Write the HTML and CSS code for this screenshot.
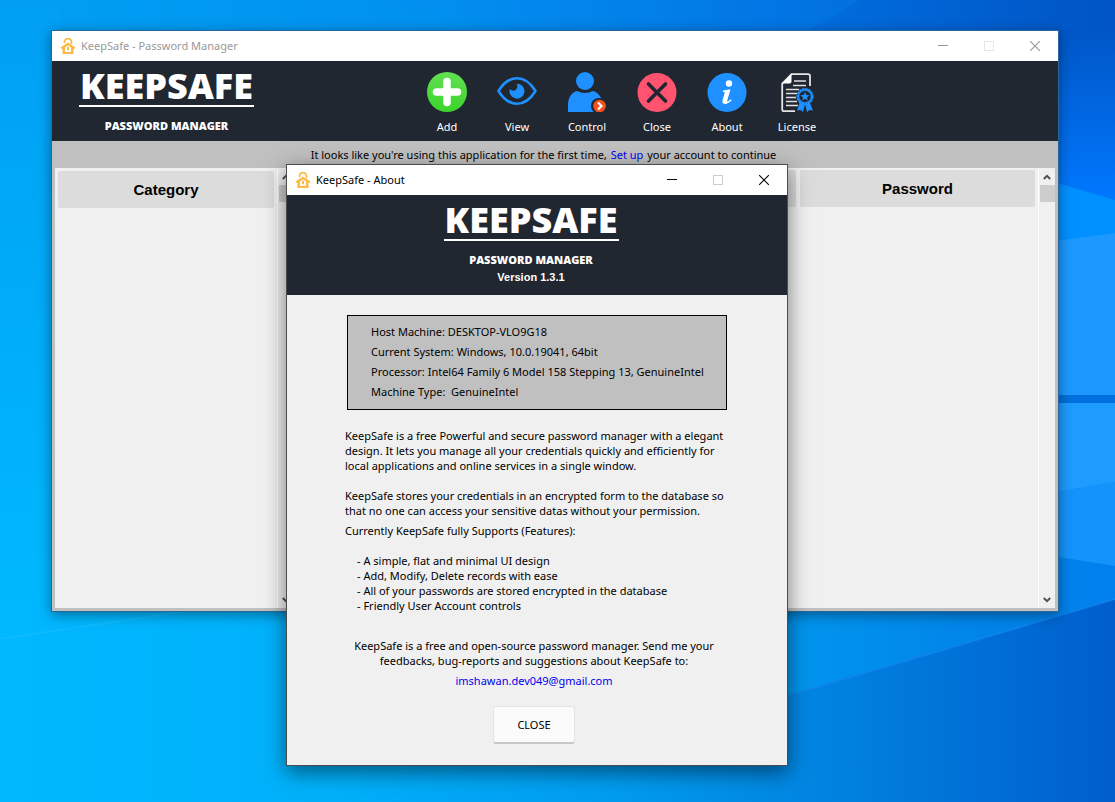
FILE: index.html
```html
<!DOCTYPE html>
<html lang="en">
<head>
<meta charset="utf-8">
<title>KeepSafe - Password Manager</title>
<link rel="stylesheet" href="styles.css">
</head>
<body>
<svg class="sprite" aria-hidden="true">
  <symbol id="app" viewBox="0 0 16 16">
    <path d="M4.500 5V4a3.500 3.500 0 0 1 7 0v2" fill="none" stroke="#fcb945" stroke-width="1.800"/>
    <path d="M8 4.500 15.500 9.500 14.500 10.800H13.500V16H2.500V10.800H1.500L.5 9.500Z" fill="#fcb945"/>
    <path d="M5 9.500 8 7.300 11 9.500V14H5Z" fill="#fff"/>
    <rect x="7" y="8.500" width="2" height="4" rx="1" fill="#fcb945"/>
  </symbol>
  <symbol id="min" viewBox="0 0 10 10"><path d="M0 4.500H10" fill="none" stroke="currentColor"/></symbol>
  <symbol id="max" viewBox="0 0 10 10"><rect x=".5" y=".5" width="9" height="9" fill="none" stroke="currentColor"/></symbol>
  <symbol id="x" viewBox="0 0 10 10"><path d="M0 0 10 10M10 0 0 10" fill="none" stroke="currentColor" stroke-width="1.100"/></symbol>
  <symbol id="up" viewBox="0 0 8 6"><path d="M.8 5 4 1.800 7.200 5" fill="none" stroke="currentColor" stroke-width="2"/></symbol>
  <symbol id="down" viewBox="0 0 8 6"><path d="M.8 1 4 4.200 7.200 1" fill="none" stroke="currentColor" stroke-width="2"/></symbol>
</svg>

<main class="desktop">
  <svg class="wallpaper" viewBox="0 0 1115 802" preserveAspectRatio="none" aria-hidden="true">
    <defs>
      <linearGradient id="top" x1="0" y1="0" x2="1" y2="0">
        <stop offset="0" stop-color="#00a0f4"/><stop offset=".4" stop-color="#0090ee"/><stop offset=".7" stop-color="#0070e0"/><stop offset="1" stop-color="#0054c4"/>
      </linearGradient>
      <linearGradient id="floor" x1="0" y1="0" x2="1" y2="0">
        <stop offset="0" stop-color="#00b8ff"/><stop offset=".3" stop-color="#00b0fa"/><stop offset=".55" stop-color="#009cf0"/><stop offset=".72" stop-color="#0086e2"/><stop offset="1" stop-color="#005ecc"/>
      </linearGradient>
      <linearGradient id="side" x1="0" y1="0" x2="0" y2="1">
        <stop offset="0" stop-color="#0056c6"/><stop offset="1" stop-color="#0078ff"/>
      </linearGradient>
      <linearGradient id="left" x1="0" y1="0" x2="0" y2="1">
        <stop offset="0" stop-color="#009ff4"/><stop offset="1" stop-color="#00b9ff"/>
      </linearGradient>
      <linearGradient id="ray" x1="0" y1="0" x2="1" y2="0">
        <stop offset="0" stop-color="#0096ee"/><stop offset=".6" stop-color="#0084e8"/><stop offset="1" stop-color="#0080ee"/>
      </linearGradient>
    </defs>
    <rect width="1115" height="802" fill="url(#top)"/>
    <path d="M375 0H860L760 60H690Z" fill="#0a8cf4" opacity=".2"/>
    <rect width="60" height="640" fill="url(#left)"/>
    <rect x="1058" y="30" width="57" height="170" fill="url(#side)"/>
    <path d="M1040 178 1115 200V600H1040Z" fill="#0090ff"/>
    <path d="M1040 243 1115 233V396H1040Z" fill="#1c98ff"/>
    <rect x="1040" y="395" width="75" height="8" fill="#0070de"/>
    <path d="M1040 403H1115V482L1040 495Z" fill="#1e9bff"/>
    <path d="M1040 495 1115 482V566L1040 554Z" fill="#1493fb"/>
    <rect y="600" width="1115" height="202" fill="url(#floor)"/>
    <path d="M780 600V698L1115 599V566L1040 554V600Z" fill="url(#ray)"/>
    <path d="M780 698 1115 599" stroke="#1485ee" stroke-width="2" opacity=".7"/>
    <path d="M0 639 200 609" stroke="#18bdff" stroke-width="2" opacity=".6"/>
  </svg>

  <section class="window main-window" aria-label="KeepSafe - Password Manager">
    <header class="titlebar inactive">
      <svg class="app-icon"><use href="#app"/></svg>
      <span class="title">KeepSafe - Password Manager</span>
      <button class="control" aria-label="Minimize"><svg><use href="#min"/></svg></button>
      <button class="control" aria-label="Maximize" disabled><svg><use href="#max"/></svg></button>
      <button class="control" aria-label="Close window"><svg><use href="#x"/></svg></button>
    </header>
    <div class="banner">
      <div class="brand">
        <div class="brand-name">KEEPSAFE</div>
        <div class="brand-sub">PASSWORD MANAGER</div>
      </div>
      <nav class="toolbar">
        <button class="tool"><svg viewBox="0 0 40 40"><defs><linearGradient id="g" x2="0" y2="1"><stop stop-color="#62e052"/><stop offset="1" stop-color="#3bd42c"/></linearGradient></defs><circle cx="20" cy="20" r="20" fill="url(#g)"/><path d="M20 9.500V30.500M9.500 20H30.500" stroke="#fff" stroke-width="7.500" stroke-linecap="round"/></svg>Add</button>
        <button class="tool"><svg viewBox="0 0 40 40"><path d="M1.500 19C12 2 28 2 38.500 19C28 36 12 36 1.500 19Z" fill="none" stroke="#1e90ff" stroke-width="2.600" stroke-linejoin="round"/><path d="M19.500 11.700A7.500 7.500 0 1 1 12.800 17A4.200 4.200 0 1 0 19.500 11.700Z" fill="#1e90ff"/></svg>View</button>
        <button class="tool"><svg viewBox="0 0 40 40"><circle cx="18" cy="9" r="9" fill="#1e90ff"/><path d="M1 40V33C1 24 6 20 10 19Q18 23 26 19C30 20 33 23 34.500 27L29 40Z" fill="#1e90ff"/><circle cx="32" cy="34" r="8" fill="#212730"/><circle cx="32.500" cy="34" r="6.300" fill="#f4511e"/><path d="M31 30.500 34.500 34 31 37.500" fill="none" stroke="#fff" stroke-width="2.200"/></svg>Control</button>
        <button class="tool"><svg viewBox="0 0 40 40"><circle cx="20" cy="20.500" r="19.500" fill="#ff5370"/><path d="M11.500 12 28.500 29M28.500 12 11.500 29" stroke="#212730" stroke-width="3.600" stroke-linecap="round"/></svg>Close</button>
        <button class="tool"><svg viewBox="0 0 40 40"><circle cx="20" cy="20.500" r="19.500" fill="#1e90ff"/><circle cx="22" cy="11.500" r="3.200" fill="#fff"/><path d="M16 18.500 23.500 17.300 20.200 28.800Q20 30 21.200 29.300L24 27.200 24.700 28.200C22 31 19 32.400 16.800 31.800Q14.800 31.100 15.500 28.500L17.700 20.700Q17.800 19.900 15.800 19.800Z" fill="#fff"/></svg>About</button>
        <button class="tool"><svg viewBox="0 0 40 40"><path d="M18 39.200H7Q5.200 39.200 5.200 37.500V11.500L14.500 2.200H31Q33 2.200 33 4V14" fill="none" stroke="#e4e4e4" stroke-width="1.800"/><path d="M5.200 11.500H12.500Q14.500 11.500 14.500 9.500V2.200Z" fill="#fff"/><path d="M17 9H29M16 13.500H29M9 17.500H22M9 21.500H20M9 25.500H19M9 29.500H20M9 33.500H21" stroke="#e0e0e0" stroke-width="1.600"/><path d="M23 30 20 38.500 23.700 38 26 40 28 32 30 40 32.500 38 36 38.500 32.500 30Z" fill="#1e90ff"/><circle cx="28" cy="24.500" r="7.500" fill="#212730" stroke="#1e90ff" stroke-width="2.200" stroke-dasharray="2.600 .6"/><circle cx="28" cy="24.500" r="6.500" fill="none" stroke="#1e90ff" stroke-width="1.400"/><path d="M28 20 29.300 23.100 32.500 23.300 30 25.400 30.800 28.500 28 26.800 25.200 28.500 26 25.400 23.500 23.300 26.700 23.100Z" fill="#1e90ff"/></svg>License</button>
      </nav>
    </div>
    <p class="notice">It looks like you're using this application for the first time, <a href="#setup">Set up</a> your account to continue</p>
    <div class="panes">
      <div class="pane pane-category"><h2 class="column">Category</h2></div>
      <div class="scrollbar"><svg><use href="#up"/></svg><span class="thumb"></span><svg class="arrow-down"><use href="#down"/></svg></div>
      <div class="pane pane-records"><div class="column"></div><h2 class="column column-password">Password</h2></div>
      <div class="scrollbar"><svg><use href="#up"/></svg><span class="thumb"></span><svg class="arrow-down"><use href="#down"/></svg></div>
    </div>
  </section>

  <section class="window about-window" role="dialog" aria-label="KeepSafe - About">
    <header class="titlebar">
      <svg class="app-icon"><use href="#app"/></svg>
      <span class="title">KeepSafe - About</span>
      <button class="control" aria-label="Minimize"><svg><use href="#min"/></svg></button>
      <button class="control" aria-label="Maximize" disabled><svg><use href="#max"/></svg></button>
      <button class="control" aria-label="Close window"><svg><use href="#x"/></svg></button>
    </header>
    <div class="about-banner">
      <div class="brand">
        <div class="brand-name">KEEPSAFE</div>
        <div class="brand-sub">PASSWORD MANAGER</div>
      </div>
      <div class="version">Version 1.3.1</div>
    </div>
    <div class="about-body">
      <div class="machine">
        <div>Host Machine: DESKTOP-VLO9G18</div>
        <div>Current System: Windows, 10.0.19041, 64bit</div>
        <div>Processor: Intel64 Family 6 Model 158 Stepping 13, GenuineIntel</div>
        <div>Machine Type:&nbsp; GenuineIntel</div>
      </div>
      <p class="intro">KeepSafe is a free Powerful and secure password manager with a elegant<br>design. It lets you manage all your credentials quickly and efficiently for<br>local applications and online services in a single window.</p>
      <p class="storage">KeepSafe stores your credentials in an encrypted form to the database so<br>that no one can access your sensitive datas without your permission.</p>
      <p class="supports">Currently KeepSafe fully Supports (Features):</p>
      <ul class="features">
        <li>- A simple, flat and minimal UI design</li>
        <li>- Add, Modify, Delete records with ease</li>
        <li>- All of your passwords are stored encrypted in the database</li>
        <li>- Friendly User Account controls</li>
      </ul>
      <div class="contact">
        <p>KeepSafe is a free and open-source password manager. Send me your<br>feedbacks, bug-reports and suggestions about KeepSafe to:</p>
        <a href="mailto:imshawan.dev049@gmail.com">imshawan.dev049@gmail.com</a>
        <button class="close-button">CLOSE</button>
      </div>
    </div>
  </section>
</main>
</body>
</html>
```
FILE: styles.css
```css
* { box-sizing: border-box; }

body {
  margin: 0;
  font-family: "Noto Sans", "Open Sans", sans-serif;
  font-size: 11px;
  line-height: 15px;
  color: #000;
}

p, h2, ul { margin: 0; padding: 0; }
ul { list-style: none; }
a { color: #0000f0; text-decoration: none; }
button { font: inherit; color: inherit; border: 0; padding: 0; background: none; }
.sprite { position: absolute; width: 0; height: 0; }

.desktop {
  position: relative;
  min-height: 100vh;
  overflow: hidden;
}
.wallpaper { position: absolute; inset: 0; width: 100%; height: 100%; }

.window {
  position: absolute;
  display: flex;
  flex-direction: column;
  background: #f0f0f0;
}
.main-window {
  left: 51px;
  right: 56px;
  top: 30px;
  min-height: 582px;
  border: 1px solid #27679b;
  box-shadow: 0 3px 12px rgba(0, 0, 0, .4);
}
.about-window {
  left: 286px;
  top: 164px;
  width: 502px;
  border: 1px solid #4a4e52;
  box-shadow: 0 6px 20px rgba(0, 0, 0, .5);
}

.titlebar {
  display: flex;
  align-items: center;
  height: 30px;
  padding-left: 8px;
  background: #fff;
}
.inactive { color: #999; }
.app-icon { width: 16px; height: 16px; margin-right: 5px; }
.title { flex: 1; padding-bottom: 2px; }
.control { display: grid; place-items: center; width: 46px; height: 30px; }
.control svg { width: 10px; height: 10px; }
.control:disabled { color: #ccc; }
.inactive .control:disabled { color: #e6e6e6; }

.banner {
  display: grid;
  grid-template-columns: 360px 1fr;
  height: 80px;
  background: #212730;
  color: #fff;
}
.brand {
  width: 175px;
  font-family: "Open Sans", sans-serif;
  font-weight: 800;
  color: #fff;
}
.banner .brand { margin: 10px 0 0 27px; }
.brand-name {
  display: flex;
  justify-content: center;
  font-size: 36px;
  line-height: 30px;
  padding-bottom: 4px;
  border-bottom: 2px solid #fff;
  white-space: nowrap;
}
.brand-sub {
  font-size: 11px;
  line-height: 14px;
  padding-top: 12px;
  text-align: center;
}

.toolbar { display: flex; padding-top: 11px; }
.tool {
  display: flex;
  flex-direction: column;
  align-items: center;
  gap: 7px;
  width: 70px;
}
.tool svg { width: 40px; height: 40px; }

.notice {
  min-height: 27px;
  padding: 6px 23px 6px 0;
  background: #c0c0c0;
  text-align: center;
}
.notice a { margin: 0 1px; }
.panes {
  flex: 1;
  display: flex;
  border: 3px solid #c0c0c0;
  border-top: 0;
}
.pane { padding: 2px 3px; }
.pane-category { width: 222px; padding-top: 3px; }
.pane-records { flex: 1; display: flex; gap: 4px; }
.column {
  flex: 1;
  height: 37px;
  border-radius: 2px;
  background: #dcdcdc;
  font-family: "Liberation Sans", Arial, sans-serif;
  font-size: 15px;
  line-height: 37px;
  text-align: center;
}
.column-password { flex: 0 0 235px; }
.scrollbar {
  display: flex;
  flex-direction: column;
  align-items: center;
  width: 17px;
  padding: 6px 0 5px;
  border-left: 1px solid #fff;
  color: #505050;
}
.scrollbar svg { width: 8px; height: 6px; }
.thumb { width: 15px; height: 17px; margin-top: 5px; background: #cdcdcd; }
.arrow-down { margin-top: auto; }

.about-banner {
  display: flex;
  flex-direction: column;
  align-items: center;
  height: 100px;
  padding: 10px 12px 0 0;
  background: #212730;
}
.version {
  padding-top: 3px;
  font-family: "Liberation Sans", Arial, sans-serif;
  font-size: 11px;
  font-weight: bold;
  color: #fff;
}
.about-body { padding: 20px 60px 21px 58px; white-space: nowrap; }
.machine {
  margin-left: 2px;
  padding: 6px 0 7px 23px;
  border: 1px solid #000;
  background: #c0c0c0;
  line-height: 20px;
}
.intro { padding-top: 18px; }
.storage { padding-top: 15px; }
.supports { padding-top: 5px; }
.features { padding: 15px 0 0 12px; }
.contact {
  display: flex;
  flex-direction: column;
  align-items: center;
  gap: 5px;
  padding: 25px 4px 0 0;
  text-align: center;
}
.close-button {
  width: 82px;
  height: 38px;
  margin-top: 13px;
  border: 1px solid #e4e4e4;
  border-bottom: 2px solid #c8c8c8;
  border-radius: 3px;
  background: #fbfbfb;
}
```
